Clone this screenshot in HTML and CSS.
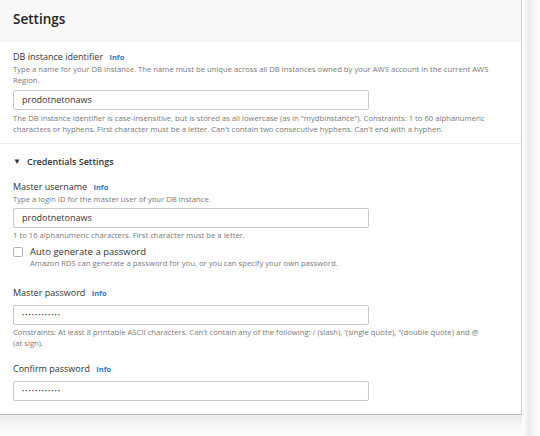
FILE: index.html
```html
<!DOCTYPE html>
<html>
<head>
<meta charset="utf-8">
<link rel="stylesheet" href="styles.css">
</head>
<body>
<div class="page">
  <div class="panel">
    <div class="header">Settings</div>
    <div class="section first">
      <div class="label">DB instance identifier <span class="info">Info</span></div>
      <div class="desc">Type a name for your DB instance. The name must be unique across all DB instances owned by your AWS account in the current AWS Region.</div>
      <div class="input">prodotnetonaws</div>
      <div class="help">The DB instance identifier is case-insensitive, but is stored as all lowercase (as in "mydbinstance"). Constraints: 1 to 60 alphanumeric characters or hyphens. First character must be a letter. Can't contain two consecutive hyphens. Can't end with a hyphen.</div>
    </div>
    <div class="section second">
      <div class="toggle"><span class="caret">▼</span>Credentials Settings</div>
      <div class="label">Master username <span class="info">Info</span></div>
      <div class="desc">Type a login ID for the master user of your DB instance.</div>
      <div class="input">prodotnetonaws</div>
      <div class="help">1 to 16 alphanumeric characters. First character must be a letter.</div>
      <div class="check">
        <span class="box"></span>
        <div>
          <div class="check-label">Auto generate a password</div>
          <div class="desc">Amazon RDS can generate a password for you, or you can specify your own password.</div>
        </div>
      </div>
      <div class="label pw">Master password <span class="info">Info</span></div>
      <div class="input dots">••••••••••••</div>
      <div class="help narrow">Constraints: At least 8 printable ASCII characters. Can't contain any of the following: / (slash), '(single quote), "(double quote) and @ (at sign).</div>
      <div class="label pw2">Confirm password <span class="info">Info</span></div>
      <div class="input dots">••••••••••••</div>
    </div>
  </div>
</div>
</body>
</html>
```
FILE: styles.css
```css
html, body {
  margin: 0;
  padding: 0;
  background: #ffffff;
}
body {
  width: 540px;
  height: 436px;
  overflow: hidden;
  font-family: "Open Sans", "Noto Sans", sans-serif;
  color: #333;
}
.page {
  width: 540px;
  height: 436px;
  background:
    linear-gradient(90deg, #ffffff 0, #ececec 40%, #f7f7f7 70%, #ffffff 100%) right top / 18px 100% no-repeat,
    linear-gradient(180deg, #e9e9e9 0, #f6f6f6 50%, #ffffff 100%) left bottom / 100% 21px no-repeat,
    #ffffff;
}
.panel {
  width: 521px;
  height: 414px;
  background: #fff;
  border-right: 1px solid #cfcfcf;
  border-bottom: 1px solid #b9b9b9;
}
.header {
  height: 42px;
  box-sizing: border-box;
  background: #f8f8f8;
  padding: 9px 13px 0;
  font-size: 13.5px;
  font-weight: 600;
  color: #222;
  line-height: 20px;
}
.section {
  padding: 0 18px 0 13px;
}
.section.first {
  padding-top: 8px;
  padding-bottom: 8px;
  border-bottom: 1px solid #eaeded;
}
.label {
  font-size: 9px;
  line-height: 14px;
  color: #333;
}
.info {
  font-size: 7.5px;
  font-weight: 700;
  color: #2a78c8;
  margin-left: 4px;
}
.desc {
  font-size: 7.7px;
  line-height: 10.5px;
  color: #7a7a7a;
}
.help {
  font-size: 7.7px;
  line-height: 11px;
  color: #7a7a7a;
  margin-top: 3px;
}
.help.narrow {
  max-width: 472px;
}
.input {
  width: 356px;
  height: 20px;
  box-sizing: border-box;
  border: 1px solid #c6cbcc;
  border-radius: 2px;
  margin-top: 5px;
  padding: 0 8px;
  font-size: 9px;
  line-height: 18px;
  color: #333;
}
.second .input {
  margin-top: 3px;
}
.second .input.dots {
  margin-top: 5px;
}
.second .help {
  margin-top: 2px;
}
.input.dots {
  font-size: 6px;
  letter-spacing: 1px;
  color: #333;
}
.toggle {
  margin-top: 11px;
  font-size: 9px;
  font-weight: 600;
  line-height: 14px;
  color: #333;
}
.caret {
  font-size: 8px;
  margin-right: 6px;
  position: relative;
  top: -1px;
}
.second .label {
  margin-top: 11px;
}
.check {
  display: flex;
  gap: 7px;
  margin-top: 4px;
}
.box {
  width: 10px;
  height: 10px;
  box-sizing: border-box;
  border: 1px solid #b0b6b7;
  border-radius: 2px;
  margin-top: 2px;
  flex: none;
}
.check-label {
  font-size: 9.5px;
  line-height: 13px;
  color: #333;
}
.second .label.pw {
  margin-top: 18px;
}
.second .label.pw2 {
  margin-top: 13px;
}
```
